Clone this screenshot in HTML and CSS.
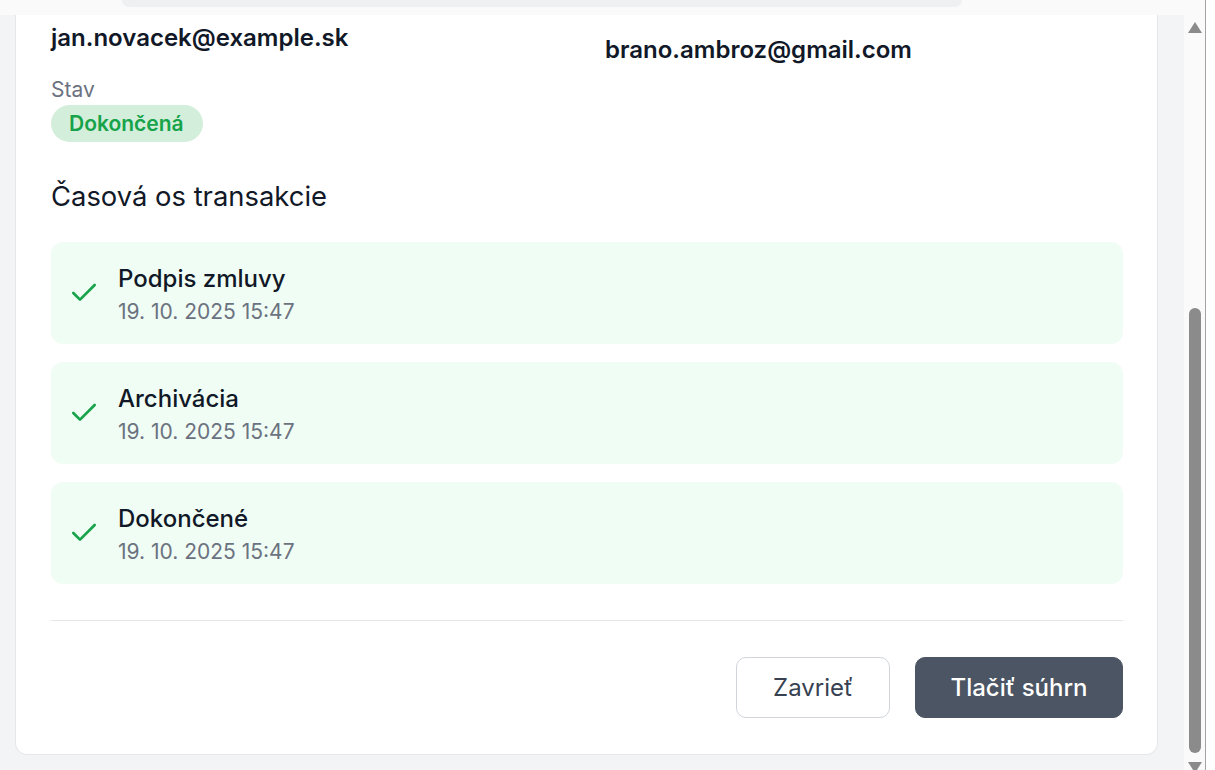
FILE: index.html
```html
<!DOCTYPE html>
<html lang="sk">
<head>
<meta charset="utf-8">
<title>Detail transakcie</title>
<link rel="stylesheet" href="styles.css">
</head>
<body>
<div class="window">
  <div class="viewport">
    <div class="topstrip"><div class="topbar"></div></div>
    <div class="body-row">
      <div class="page">
        <div class="card">
          <div class="parties">
            <div class="party"><div class="email">jan.novacek@example.sk</div></div>
            <div class="party party-right"><div class="email">brano.ambroz@gmail.com</div></div>
          </div>
          <div class="status">
            <div class="label">Stav</div>
            <span class="badge">Dokončená</span>
          </div>
          <h2 class="section-title">Časová os transakcie</h2>
          <div class="timeline">
            <div class="tl-item">
              <svg class="tl-icon" viewBox="0 0 24 24" fill="none" stroke="currentColor" stroke-width="2" stroke-linecap="round" stroke-linejoin="round"><path d="M20 6 9 17l-5-5"/></svg>
              <div class="tl-text"><div class="tl-title">Podpis zmluvy</div><div class="tl-date">19. 10. 2025 15:47</div></div>
            </div>
            <div class="tl-item">
              <svg class="tl-icon" viewBox="0 0 24 24" fill="none" stroke="currentColor" stroke-width="2" stroke-linecap="round" stroke-linejoin="round"><path d="M20 6 9 17l-5-5"/></svg>
              <div class="tl-text"><div class="tl-title">Archivácia</div><div class="tl-date">19. 10. 2025 15:47</div></div>
            </div>
            <div class="tl-item">
              <svg class="tl-icon" viewBox="0 0 24 24" fill="none" stroke="currentColor" stroke-width="2" stroke-linecap="round" stroke-linejoin="round"><path d="M20 6 9 17l-5-5"/></svg>
              <div class="tl-text"><div class="tl-title">Dokončené</div><div class="tl-date">19. 10. 2025 15:47</div></div>
            </div>
          </div>
          <div class="actions">
            <button class="btn btn-outline">Zavrieť</button>
            <button class="btn btn-dark">Tlačiť súhrn</button>
          </div>
        </div>
      </div>
      <div class="scrollbar">
        <div class="sb-up"></div>
        <div class="sb-thumb"></div>
        <div class="sb-down"></div>
      </div>
    </div>
  </div>
  <div class="vline"></div>
  <div class="edge"></div>
</div>
</body>
</html>
```
FILE: styles.css
```css
* { box-sizing: border-box; }
html, body { margin: 0; padding: 0; }
body {
  width: 1215px;
  height: 770px;
  overflow: hidden;
  background: #ffffff;
  font-family: Inter, "Noto Sans", "Liberation Sans", sans-serif;
  color: #111827;
}
.window { display: flex; height: 770px; }
.viewport { width: 1205px; display: flex; flex-direction: column; }
.topstrip { height: 15px; background: #fafafa; padding-left: 122px; flex: none; }
.topbar { width: 840px; height: 7px; background: #eff0f2; border-radius: 0 0 7px 7px; }
.body-row { flex: 1; display: flex; min-height: 0; }
.page {
  width: 1184px;
  background: #f3f4f6;
  padding: 0 26px 0 15px;
  overflow: hidden;
}
.card {
  background: #ffffff;
  border: 1px solid #e5e7eb;
  border-top: none;
  border-radius: 0 0 12px 12px;
  padding: 8px 34px 36px 35px;
}
.parties { display: grid; grid-template-columns: 517px 1fr; column-gap: 37px; }
.email { font-size: 24px; font-weight: 600; line-height: 30px; color: #111827; }
.party-right { padding-top: 12px; }
.status { margin-top: 13px; }
.label { font-size: 21px; line-height: 24px; color: #6b7280; }
.badge {
  display: inline-block;
  margin-top: 3px;
  height: 37px;
  line-height: 37px;
  padding: 0 19px 0 18px;
  border-radius: 999px;
  background: #d4eedc;
  color: #16a34a;
  font-size: 21px;
  font-weight: 600;
}
.section-title { margin: 36px 0 0; font-size: 27.4px; line-height: 36px; font-weight: 400; color: #111827; }
.timeline { margin-top: 28px; display: flex; flex-direction: column; gap: 18px; }
.tl-item {
  height: 102px;
  background: #f0fdf4;
  border-radius: 12px;
  display: flex;
  align-items: center;
  padding-left: 17px;
  gap: 18px;
}
.tl-icon { width: 32px; height: 32px; color: #16a34a; flex: none; }
.tl-text { padding-top: 3px; }
.tl-title { font-size: 24px; line-height: 32px; font-weight: 500; color: #111827; }
.tl-date { margin-top: 3px; font-size: 21px; line-height: 28px; color: #6b7280; }
.actions {
  margin-top: 36px;
  border-top: 1px solid #e5e7eb;
  padding-top: 36px;
  display: flex;
  justify-content: flex-end;
  gap: 25px;
}
.btn {
  height: 61px;
  padding: 0 36px;
  border-radius: 10px;
  font-family: Inter, "Noto Sans", "Liberation Sans", sans-serif;
  font-size: 24px;
}
.btn-outline { background: #ffffff; border: 1px solid #d1d5db; color: #374151; font-weight: 400; }
.btn-dark { background: #4b5563; border: 1px solid #4b5563; color: #ffffff; font-weight: 500; padding: 0 34.5px; }
.scrollbar { width: 21px; background: #fafafa; display: flex; flex-direction: column; align-items: center; }
.sb-up {
  margin-top: 7px;
  width: 0; height: 0;
  border-left: 7.5px solid transparent;
  border-right: 7.5px solid transparent;
  border-bottom: 11px solid #8b8b8b;
}
.sb-thumb { margin-top: 275px; width: 12px; height: 445px; background: #8b8b8b; border-radius: 6px; flex: none; }
.sb-down {
  margin-top: 9px;
  width: 0; height: 0;
  border-left: 7.5px solid transparent;
  border-right: 7.5px solid transparent;
  border-top: 11px solid #8b8b8b;
  flex: none;
}
.vline { width: 1px; background: #a3a3a3; }
.edge { width: 9px; background: #ffffff; }
```
